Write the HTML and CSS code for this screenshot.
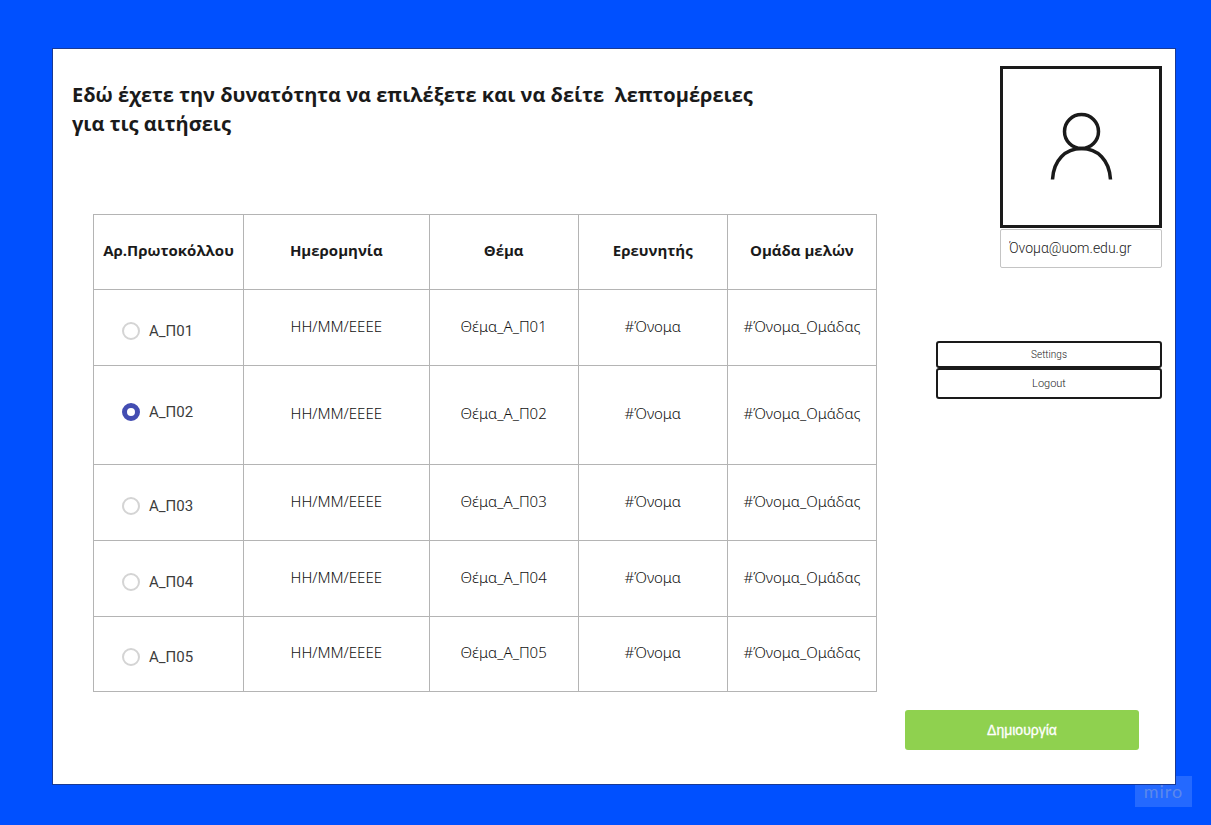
FILE: index.html
```html
<!DOCTYPE html>
<html lang="el">
<head>
<meta charset="utf-8">
<meta name="viewport" content="width=device-width, initial-scale=1">
<title>Αιτήσεις</title>
<link rel="stylesheet" href="styles.css">
</head>
<body>
<div class="card">
  <main class="main">
    <h1 class="title">Εδώ έχετε την δυνατότητα να επιλέξετε και να δείτε&nbsp; λεπτομέρειες για τις αιτήσεις</h1>
    <table class="requests">
      <colgroup><col class="col-id"><col class="col-date"><col class="col-item"><col class="col-item"><col class="col-item"></colgroup>
      <thead>
        <tr><th scope="col">Αρ.Πρωτοκόλλου</th><th scope="col">Ημερομηνία</th><th scope="col">Θέμα</th><th scope="col">Ερευνητής</th><th scope="col">Ομάδα μελών</th></tr>
      </thead>
      <tbody>
        <tr><td class="pick"><label class="choice"><input type="radio" name="request" class="radio"><span>Α_Π01</span></label></td><td>ΗΗ/ΜΜ/ΕΕΕΕ</td><td>Θέμα_Α_Π01</td><td>#Όνομα</td><td>#Όνομα_Ομάδας</td></tr>
        <tr class="selected"><td class="pick"><label class="choice"><input type="radio" name="request" class="radio" checked><span>Α_Π02</span></label></td><td>ΗΗ/ΜΜ/ΕΕΕΕ</td><td>Θέμα_Α_Π02</td><td>#Όνομα</td><td>#Όνομα_Ομάδας</td></tr>
        <tr><td class="pick"><label class="choice"><input type="radio" name="request" class="radio"><span>Α_Π03</span></label></td><td>ΗΗ/ΜΜ/ΕΕΕΕ</td><td>Θέμα_Α_Π03</td><td>#Όνομα</td><td>#Όνομα_Ομάδας</td></tr>
        <tr><td class="pick"><label class="choice"><input type="radio" name="request" class="radio"><span>Α_Π04</span></label></td><td>ΗΗ/ΜΜ/ΕΕΕΕ</td><td>Θέμα_Α_Π04</td><td>#Όνομα</td><td>#Όνομα_Ομάδας</td></tr>
        <tr><td class="pick"><label class="choice"><input type="radio" name="request" class="radio"><span>Α_Π05</span></label></td><td>ΗΗ/ΜΜ/ΕΕΕΕ</td><td>Θέμα_Α_Π05</td><td>#Όνομα</td><td>#Όνομα_Ομάδας</td></tr>
      </tbody>
    </table>
  </main>
  <aside class="side">
    <div class="avatar">
      <svg class="avatar-icon" viewBox="0 0 62 68" fill="none" stroke="#1a1a1a" stroke-width="3.5" aria-hidden="true">
        <circle cx="31.5" cy="18.5" r="17"/>
        <path d="M2.500 66.500C3.500 47 15.500 35.500 31.500 35.500s28 11.500 29 31"/>
      </svg>
    </div>
    <input class="email" type="email" value="Όνομα@uom.edu.gr" aria-label="Email">
    <div class="menu">
      <button type="button" class="menu-button settings">Settings</button>
      <button type="button" class="menu-button logout">Logout</button>
    </div>
    <button type="button" class="create">Δημιουργία</button>
  </aside>
  <div class="badge">miro</div>
</div>
</body>
</html>
```

FILE: styles.css
```css
* { box-sizing: border-box; }

body {
  margin: 0;
  min-height: 100vh;
  padding: 48px 35px 40px 52px;
  display: flex;
  background: #0050ff;
  color: #1a1a1a;
  font-family: Roboto, "Liberation Sans", sans-serif;
}

.card {
  position: relative;
  flex: 1;
  display: grid;
  grid-template-columns: 1fr 257px;
  column-gap: 28px;
  padding: 17px 13px 34px 19px;
  border: 1px solid #1a3a94;
  background: #fff;
}

.title {
  max-width: 700px;
  margin: 14px 0 76px;
  font: 700 20px/29px "Open Sans", "Noto Sans", sans-serif;
}

.requests {
  width: calc(100% - 21px);
  margin-left: 21px;
  table-layout: fixed;
  border-collapse: collapse;
  border: 1px solid #a6a6a6;
  color: #111;
  font: 300 15px/20px "Noto Sans", sans-serif;
}

.col-id { width: 150px; }
.col-date { width: 23.7%; }

.requests tr { height: 76px; }
.requests .selected { height: 99px; }
.requests tr:last-child { height: 75px; }

.requests th,
.requests td {
  padding: 0 0 4px;
  border: 1px solid #b4b4b4;
  text-align: center;
  vertical-align: middle;
}

.requests th {
  color: #1a1a1a;
  font-weight: 700;
  font-family: "Open Sans", "Noto Sans", sans-serif;
}

.requests .pick { padding: 6px 0 0 28px; }
.requests .selected .pick { padding: 0 0 6px 28px; }

.choice {
  display: flex;
  align-items: center;
  gap: 9px;
  color: #3c3c3c;
  font: 15px/20px Roboto, "Liberation Sans", sans-serif;
}

.radio {
  appearance: none;
  width: 18px;
  height: 18px;
  margin: 0;
  border: 2px solid #d4d4d4;
  border-radius: 50%;
  background: #fff;
}

.radio:checked { border: 5px solid #434db2; }

.side {
  display: flex;
  flex-direction: column;
  align-items: flex-end;
}

.avatar {
  width: 162px;
  height: 162px;
  display: flex;
  align-items: center;
  justify-content: center;
  border: 3px solid #1a1a1a;
}

.avatar-icon { width: 62px; height: 68px; overflow: visible; }

.email {
  width: 162px;
  height: 39px;
  margin-top: 1px;
  padding: 0 8px 2px;
  border: 1px solid #c4c4c4;
  border-radius: 2px;
  color: #1a1a1a;
  background: #fff;
  font: 300 14px Roboto, "Liberation Sans", sans-serif;
}

.menu {
  width: 226px;
  margin-top: 73px;
  display: flex;
  flex-direction: column;
}

.menu-button {
  padding: 0 0 1px;
  border: 2px solid #1a1a1a;
  border-radius: 3px;
  background: #fff;
  color: #1a1a1a;
  font-family: Roboto, "Liberation Sans", sans-serif;
  font-weight: 300;
}

.settings { height: 27px; font-size: 10px; }
.logout { height: 31px; font-size: 11px; }

.create {
  width: 234px;
  height: 40px;
  margin: auto 23px 0 0;
  border: 0;
  border-radius: 3px;
  background: #8fd14f;
  color: #fff;
  font: 14px "Liberation Sans", Arial, sans-serif;
  -webkit-text-stroke: 0.3px #fff;
}

.badge {
  position: absolute;
  z-index: -1;
  right: -17px;
  bottom: -23px;
  width: 57px;
  height: 31px;
  background: #2469ff;
  color: #5b88ec;
  font: 18px/30px Lato, sans-serif;
  letter-spacing: 1px;
  text-align: center;
}
```
